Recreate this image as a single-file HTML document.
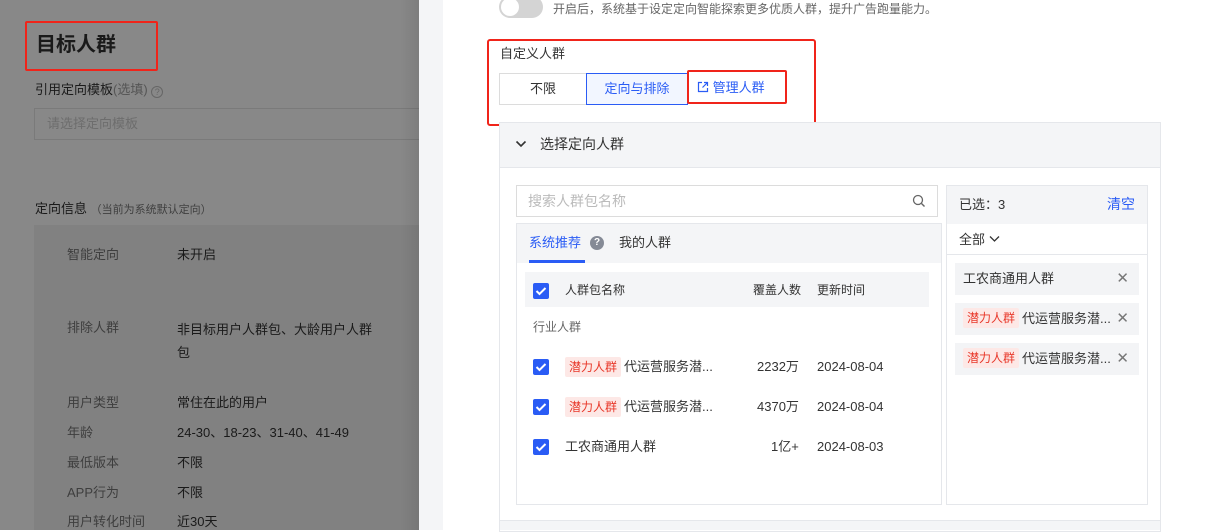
<!DOCTYPE html>
<html><head><meta charset="utf-8"><style>
*{box-sizing:border-box;margin:0;padding:0}
body{width:1217px;height:530px;overflow:hidden;position:relative;background:#fff;font-family:"Liberation Sans","Noto Sans CJK SC",sans-serif;font-size:13px;color:#333;line-height:20px}
.a{position:absolute;white-space:nowrap}
.ov{position:absolute;left:0;top:0;width:419px;height:530px;background:#888}
.ovt{color:#1a1a1a}
.ovg{color:#3e3e3e}
.chk{position:absolute;width:16px;height:16px;background:#2a5cf5;border-radius:2px}
.chk svg{position:absolute;left:2px;top:3px}
.tag{display:inline-block;background:#fde8e6;color:#e8382a;font-size:12px;padding:0 4px;border-radius:2px;line-height:20px;margin-right:3px;vertical-align:top}
.x{position:absolute;right:10px;top:0;color:#777;font-size:15px;line-height:32px}
.sel{position:absolute;left:955px;width:184px;height:32px;background:#f3f4f6;line-height:32px;padding-left:8px}
.sel .tag{vertical-align:middle;margin-top:-3px}
</style></head><body>
<div class="ov">
  <div class="a" style="left:25px;top:21px;width:133px;height:50px;border:2px solid #f0241a;border-radius:2px"></div>
  <div class="a ovt" style="left:36px;top:31px;font-size:20px;line-height:28px;font-weight:bold">目标人群</div>
  <div class="a ovt" style="left:35px;top:80px;font-size:13px">引用定向模板<span style="color:#555">(选填)</span> <span style="display:inline-block;width:12px;height:12px;border:1px solid #666;border-radius:50%;font-size:9px;text-align:center;line-height:10px;color:#666;vertical-align:-1px">?</span></div>
  <div class="a" style="left:34px;top:108px;width:390px;height:32px;border:1px solid #7a7a7a;color:#6d6d6d;padding:5px 12px;font-size:13px">请选择定向模板</div>
  <div class="a ovt" style="left:35px;top:199px;font-size:13px">定向信息 <span style="font-size:11px;color:#404040">（当前为系统默认定向）</span></div>
  <div class="a" style="left:34px;top:225px;width:385px;height:305px;background:#818181"></div>
  <div class="a ovg" style="left:67px;top:245px">智能定向</div><div class="a ovt" style="left:177px;top:245px">未开启</div>
  <div class="a ovg" style="left:67px;top:318px">排除人群</div><div class="a ovt" style="left:177px;top:318px;line-height:23px">非目标用户人群包、大龄用户人群<br>包</div>
  <div class="a ovg" style="left:67px;top:393px">用户类型</div><div class="a ovt" style="left:177px;top:393px">常住在此的用户</div>
  <div class="a ovg" style="left:67px;top:423px">年龄</div><div class="a ovt" style="left:177px;top:423px">24-30、18-23、31-40、41-49</div>
  <div class="a ovg" style="left:67px;top:453px">最低版本</div><div class="a ovt" style="left:177px;top:453px">不限</div>
  <div class="a ovg" style="left:67px;top:483px">APP行为</div><div class="a ovt" style="left:177px;top:483px">不限</div>
  <div class="a ovg" style="left:67px;top:512px">用户转化时间</div><div class="a ovt" style="left:177px;top:512px">近30天</div>
  <div class="a" style="left:400px;top:0;width:19px;height:530px;background:linear-gradient(90deg,rgba(0,0,0,0),rgba(0,0,0,0.08))"></div>
</div>
<div class="a" style="left:419px;top:0;width:24px;height:530px;background:#f4f5f7"></div>
<div class="a" style="left:499px;top:-4px;width:44px;height:22px;border-radius:11px;background:#d4d4d4"></div>
<div class="a" style="left:501px;top:-2px;width:18px;height:18px;border-radius:50%;background:#fff"></div>
<div class="a" style="left:553px;top:-1px;color:#666;font-size:12px">开启后，系统基于设定定向智能探索更多优质人群，提升广告跑量能力。</div>
<div class="a" style="left:487px;top:39px;width:329px;height:87px;border:2px solid #f0241a;border-radius:3px"></div>
<div class="a" style="left:500px;top:44px">自定义人群</div>
<div class="a" style="left:499px;top:73px;width:88px;height:32px;border:1px solid #dcdcdc;text-align:center;line-height:30px">不限</div>
<div class="a" style="left:586px;top:73px;width:102px;height:32px;border:1px solid #2a5cf5;background:#f2f6ff;color:#2a5cf5;text-align:center;line-height:30px">定向与排除</div>
<div class="a" style="left:687px;top:70px;width:100px;height:34px;border:2px solid #f0241a;border-radius:2px"></div>
<div class="a" style="left:697px;top:78px;color:#2a5cf5;font-size:13px"><svg width="12" height="12" viewBox="0 0 12 12" style="vertical-align:-1px"><path d="M5 1.5H1.5v9h9V7M7 1.5h3.5V5M10.5 1.5L5.5 6.5" fill="none" stroke="#2a5cf5" stroke-width="1.2"/></svg> 管理人群</div>
<div class="a" style="left:499px;top:122px;width:662px;height:410px;border:1px solid #e5e7eb;background:#fff"></div>
<div class="a" style="left:500px;top:123px;width:660px;height:45px;background:#f4f5f7;border-bottom:1px solid #e5e7eb"></div>
<svg class="a" style="left:515px;top:140px" width="12" height="8" viewBox="0 0 12 8"><path d="M1.5 1.5L6 6l4.5-4.5" fill="none" stroke="#333" stroke-width="1.6"/></svg>
<div class="a" style="left:540px;top:134px;font-size:14px">选择定向人群</div>
<div class="a" style="left:500px;top:520px;width:660px;height:10px;background:#f4f5f7;border-top:1px solid #e5e7eb"></div>
<div class="a" style="left:516px;top:185px;width:422px;height:32px;border:1px solid #dcdcdc;color:#bbb;padding:5px 11px;font-size:14px">搜索人群包名称</div>
<svg class="a" style="left:912px;top:194px" width="14" height="14" viewBox="0 0 14 14"><circle cx="6" cy="6" r="4.5" fill="none" stroke="#666" stroke-width="1.3"/><path d="M9.5 9.5L12.5 12.5" stroke="#666" stroke-width="1.4"/></svg>
<div class="a" style="left:516px;top:223px;width:426px;height:282px;border:1px solid #e5e7eb"></div>
<div class="a" style="left:517px;top:224px;width:424px;height:39px;background:#f4f5f7"></div>
<div class="a" style="left:529px;top:233px;color:#2a5cf5">系统推荐</div>
<div class="a" style="left:590px;top:236px;width:14px;height:14px;border-radius:50%;background:#858a96;color:#fff;font-size:10px;text-align:center;line-height:14px;font-weight:bold">?</div>
<div class="a" style="left:619px;top:233px">我的人群</div>
<div class="a" style="left:529px;top:260px;width:56px;height:3px;background:#2a5cf5"></div>
<div class="a" style="left:525px;top:272px;width:404px;height:35px;background:#f4f5f7"></div>
<div class="chk" style="left:533px;top:283px"><svg width="12" height="10" viewBox="0 0 12 10"><path d="M1.5 5l3 3 6-6" fill="none" stroke="#fff" stroke-width="2"/></svg></div>
<div class="a" style="left:565px;top:280px;font-size:12px">人群包名称</div>
<div class="a" style="left:753px;top:280px;font-size:12px">覆盖人数</div>
<div class="a" style="left:817px;top:280px;font-size:12px">更新时间</div>
<div class="a" style="left:533px;top:317px;font-size:12px;color:#666">行业人群</div>
<div class="chk" style="left:533px;top:359px"><svg width="12" height="10" viewBox="0 0 12 10"><path d="M1.5 5l3 3 6-6" fill="none" stroke="#fff" stroke-width="2"/></svg></div>
<div class="a" style="left:565px;top:357px"><span class="tag">潜力人群</span>代运营服务潜...</div>
<div class="a" style="left:757px;top:357px">2232万</div><div class="a" style="left:817px;top:357px">2024-08-04</div>
<div class="chk" style="left:533px;top:399px"><svg width="12" height="10" viewBox="0 0 12 10"><path d="M1.5 5l3 3 6-6" fill="none" stroke="#fff" stroke-width="2"/></svg></div>
<div class="a" style="left:565px;top:397px"><span class="tag">潜力人群</span>代运营服务潜...</div>
<div class="a" style="left:757px;top:397px">4370万</div><div class="a" style="left:817px;top:397px">2024-08-04</div>
<div class="chk" style="left:533px;top:439px"><svg width="12" height="10" viewBox="0 0 12 10"><path d="M1.5 5l3 3 6-6" fill="none" stroke="#fff" stroke-width="2"/></svg></div>
<div class="a" style="left:565px;top:437px">工农商通用人群</div>
<div class="a" style="left:771px;top:437px">1亿+</div><div class="a" style="left:817px;top:437px">2024-08-03</div>
<div class="a" style="left:946px;top:185px;width:202px;height:320px;border:1px solid #e5e7eb"></div>
<div class="a" style="left:947px;top:186px;width:200px;height:38px;background:#f4f5f7"></div>
<div class="a" style="left:959px;top:195px">已选：3</div>
<div class="a" style="left:1107px;top:194px;color:#2a5cf5;font-size:14px">清空</div>
<div class="a" style="left:959px;top:230px">全部 <svg width="11" height="8" viewBox="0 0 11 8" style="vertical-align:1px"><path d="M1 1.5l4.5 4.5L10 1.5" fill="none" stroke="#333" stroke-width="1.3"/></svg></div>
<div class="a" style="left:947px;top:254px;width:200px;height:1px;background:#e5e7eb"></div>
<div class="sel" style="top:263px">工农商通用人群<span class="x">✕</span></div>
<div class="sel" style="top:303px"><span class="tag">潜力人群</span>代运营服务潜...<span class="x">✕</span></div>
<div class="sel" style="top:343px"><span class="tag">潜力人群</span>代运营服务潜...<span class="x">✕</span></div>
</body></html>
